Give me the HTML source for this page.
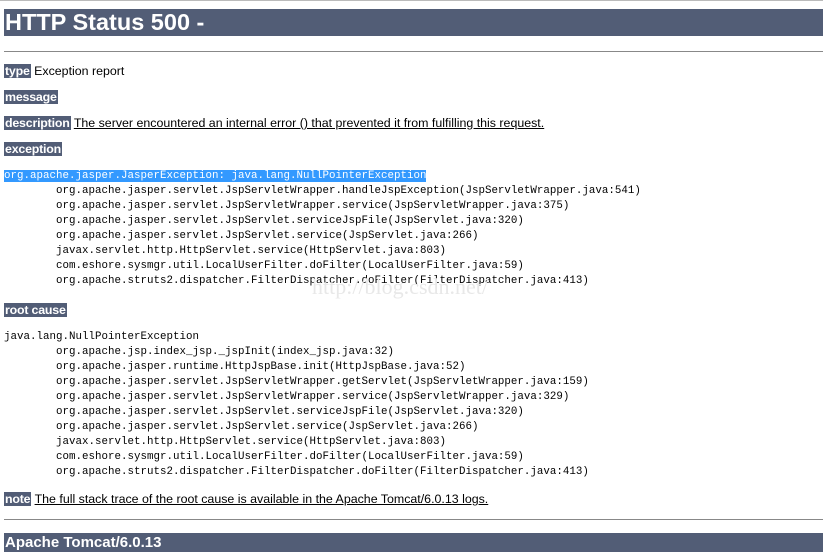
<!DOCTYPE html>
<html><head><style>
html,body{margin:0;padding:0;background:#fff;width:823px;height:552px;overflow:hidden;position:relative}
body{font-family:"Liberation Sans",Tahoma,sans-serif;font-size:12.4px;color:#000}
.a{position:absolute;white-space:pre}
.bar{position:absolute;left:4px;right:0;background:#525D76;color:#fff;font-weight:bold}
.lb{background:#525D76;color:#fff;font-weight:bold;padding:0 1px;letter-spacing:-0.2px}
.hr{position:absolute;left:4px;right:0;height:1px;background:#888}
.m{font-family:"Liberation Mono",monospace;font-size:10.8px;line-height:15px;letter-spacing:0.02px}
u{text-decoration:underline}
</style></head><body>
<div style="position:absolute;left:0;top:0;right:0;height:1px;background:#bbb"></div>
<div class="bar" style="top:9px;height:27px;font-size:23.5px;line-height:27px;padding-left:1px">HTTP Status 500 -</div>
<div class="hr" style="top:51px"></div>
<div class="a" style="left:4px;top:63px;line-height:16px"><span class="lb">type</span> Exception report</div>
<div class="a" style="left:4px;top:89px;line-height:16px"><span class="lb">message</span></div>
<div class="a" style="left:4px;top:115px;line-height:16px"><span class="lb">description</span> <u>The server encountered an internal error () that prevented it from fulfilling this request.</u></div>
<div class="a" style="left:4px;top:141px;line-height:16px"><span class="lb">exception</span></div>
<div class="a m" style="left:4px;top:169px"><span style="background:#3399ff;color:#fff">org.apache.jasper.JasperException: java.lang.NullPointerException</span>
        org.apache.jasper.servlet.JspServletWrapper.handleJspException(JspServletWrapper.java:541)
        org.apache.jasper.servlet.JspServletWrapper.service(JspServletWrapper.java:375)
        org.apache.jasper.servlet.JspServlet.serviceJspFile(JspServlet.java:320)
        org.apache.jasper.servlet.JspServlet.service(JspServlet.java:266)
        javax.servlet.http.HttpServlet.service(HttpServlet.java:803)
        com.eshore.sysmgr.util.LocalUserFilter.doFilter(LocalUserFilter.java:59)
        org.apache.struts2.dispatcher.FilterDispatcher.doFilter(FilterDispatcher.java:413)</div>
<div class="a" style="left:312px;top:274px;font-family:'Liberation Serif',serif;font-size:22px;color:#e8e8e8">http://blog.csdn.net/</div>
<div class="a" style="left:4px;top:302px;line-height:16px"><span class="lb">root cause</span></div>
<div class="a m" style="left:4px;top:330px">java.lang.NullPointerException
        org.apache.jsp.index_jsp._jspInit(index_jsp.java:32)
        org.apache.jasper.runtime.HttpJspBase.init(HttpJspBase.java:52)
        org.apache.jasper.servlet.JspServletWrapper.getServlet(JspServletWrapper.java:159)
        org.apache.jasper.servlet.JspServletWrapper.service(JspServletWrapper.java:329)
        org.apache.jasper.servlet.JspServlet.serviceJspFile(JspServlet.java:320)
        org.apache.jasper.servlet.JspServlet.service(JspServlet.java:266)
        javax.servlet.http.HttpServlet.service(HttpServlet.java:803)
        com.eshore.sysmgr.util.LocalUserFilter.doFilter(LocalUserFilter.java:59)
        org.apache.struts2.dispatcher.FilterDispatcher.doFilter(FilterDispatcher.java:413)</div>
<div class="a" style="left:4px;top:491px;line-height:16px"><span class="lb">note</span> <u>The full stack trace of the root cause is available in the Apache Tomcat/6.0.13 logs.</u></div>
<div class="hr" style="top:519px"></div>
<div class="bar" style="top:533px;height:19px;font-size:15px;line-height:19px;padding-left:1px">Apache Tomcat/6.0.13</div>
</body></html>
